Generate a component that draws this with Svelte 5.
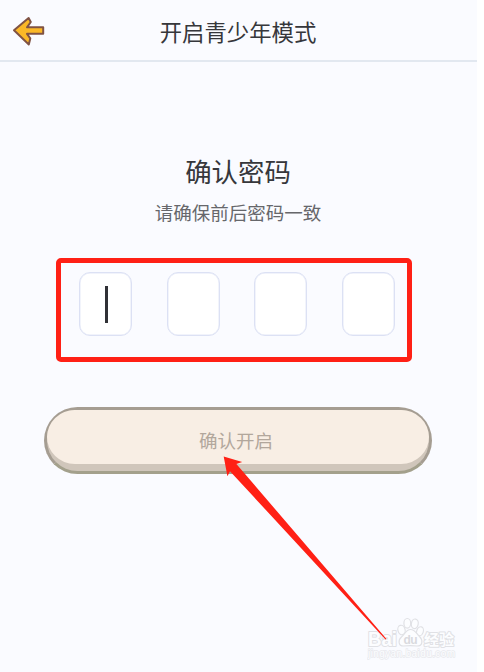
<script lang="ts">
    const length = 4
    let digits: string[] = $state(Array(length).fill(''))
    let active = $derived(digits.findIndex((d) => d === ''))
</script>

<div class="page">
    <header>
        <button class="back" aria-label="返回">
            <svg width="34" height="32" viewBox="0 0 34 32">
                <path d="M2 15.2 L16.6 3 L18.8 7 L15 12.3 H31.2 V18.8 H15 L18.3 23.4 L16.8 29.5 Z" />
            </svg>
        </button>
        <h1>开启青少年模式</h1>
    </header>

    <main>
        <h2>确认密码</h2>
        <p class="tip">请确保前后密码一致</p>

        <div class="frame">
            {#each digits as digit, i}
                <div class="box">
                    {digit}
                    {#if i === active}
                        <span class="caret"></span>
                    {/if}
                </div>
            {/each}
        </div>

        <button class="confirm"><span>确认开启</span></button>
    </main>

    <svg class="watermark" width="96" height="46" viewBox="0 0 96 46">
        <g class="paw">
            <ellipse cx="34.5" cy="15" rx="3.6" ry="4.8" transform="rotate(-15 34.5 15)" />
            <ellipse cx="40.3" cy="8.3" rx="3.4" ry="4.8" />
            <ellipse cx="47.8" cy="8.8" rx="3.4" ry="4.8" transform="rotate(10 47.8 8.8)" />
            <ellipse cx="53" cy="16.3" rx="3.3" ry="4.6" transform="rotate(18 53 16.3)" />
            <path d="M43.5 14.5 C39 14.5 38 19 34.5 22 C31 25 31 31 36.5 31 C41 30.6 46 30.6 50 31 C56 31 56 25 52.5 21.5 C49 18 48 14.5 43.5 14.5 Z" />
        </g>
        <text class="logo" x="1" y="30.5" textLength="29" lengthAdjust="spacingAndGlyphs">Bai</text>
        <text class="du" x="36.5" y="29" textLength="14">du</text>
        <text class="cn" x="57" y="29.5" textLength="30">经验</text>
        <text class="url" x="1" y="42" textLength="87">jingyan.baidu.com</text>
    </svg>

    <svg class="pointer" width="164" height="184" viewBox="0 0 164 184">
        <polygon points="0.7,0.5 19.2,6 13.4,8 163.5,183 162.5,183.4 7,15.2 4.4,20.3" />
    </svg>
</div>

<style>
    :global(body) {
        background: #fff;
    }

    .page {
        position: relative;
        width: 477px;
        height: 672px;
        overflow: hidden;
        background: #fafbff;
        color: #36373b;
        font-family: "Noto Sans CJK SC", sans-serif;
    }

    button {
        border: none;
        padding: 0;
        background: none;
        font-family: inherit;
        cursor: pointer;
    }

    header {
        display: flex;
        box-sizing: border-box;
        height: 62px;
        padding: 15px 0 0 12px;
        border-bottom: 2px solid #e2e8f0;
    }

    .back {
        width: 34px;
        height: 32px;
    }

    .back svg {
        display: block;
    }

    .back path {
        fill: #fbb827;
        stroke: #805344;
        stroke-width: 2;
        stroke-linejoin: round;
    }

    h1 {
        flex: 1;
        margin: 0 47px 0 0;
        font-size: 22.4px;
        font-weight: 400;
        line-height: 32px;
        text-align: center;
    }

    main {
        display: flex;
        flex-direction: column;
        align-items: center;
    }

    h2 {
        margin: 89px 1px 0 0;
        font-size: 26.4px;
        font-weight: 400;
        line-height: 40px;
    }

    .tip {
        margin: 7px 1px 0 0;
        color: #66676b;
        font-size: 18.5px;
        line-height: 28px;
    }

    .frame {
        display: flex;
        gap: 34.5px;
        box-sizing: border-box;
        width: 356px;
        height: 104px;
        margin: 32px 9px 0 0;
        padding: 9px 0 0 18px;
        border: 5px solid #ff2015;
        border-radius: 5px;
    }

    .box {
        display: flex;
        align-items: center;
        justify-content: center;
        flex: none;
        box-sizing: border-box;
        width: 53px;
        height: 64px;
        border: 1px solid #dce1f4;
        border-radius: 11px;
        background: #fff;
        box-shadow: inset 0 0 0 0.5px #e4e8f7;
        font-size: 26px;
    }

    .caret {
        width: 3px;
        height: 37px;
        margin-left: 1px;
        background: #303136;
    }

    .confirm {
        box-sizing: border-box;
        width: 388px;
        height: 67px;
        margin: 45px 1px 0 0;
        padding-bottom: 7px;
        border: 3px solid #a59d92;
        border-bottom-color: #a3a08c;
        border-radius: 34px;
        background: #d0c6bb;
    }

    .confirm span {
        display: block;
        height: 54px;
        border-radius: 31px / 30px;
        background: #f8eee4;
        color: #b2a79c;
        font-size: 18.5px;
        line-height: 61px;
        text-indent: -4px;
    }

    .watermark {
        position: absolute;
        left: 367px;
        top: 615px;
        font-family: "Liberation Sans", "Noto Sans CJK SC", sans-serif;
        font-weight: 700;
    }

    .watermark text,
    .paw {
        fill: #fcfdff;
        stroke: #e0e1e5;
        stroke-width: 1.2;
        stroke-linejoin: round;
    }

    .watermark text {
        paint-order: stroke;
        stroke-width: 2;
    }

    .watermark .logo {
        font-size: 19.5px;
    }

    .watermark .du {
        font-size: 12px;
        fill: #d9dade;
        stroke: none;
    }

    .watermark .cn {
        font-family: "Noto Sans CJK SC", sans-serif;
        font-size: 15px;
    }

    .watermark .url {
        font-size: 10px;
        font-weight: 400;
        stroke: #e8e9ed;
        stroke-width: 1.4;
    }

    .pointer {
        position: absolute;
        left: 223px;
        top: 456px;
        fill: #ff2015;
    }
</style>
